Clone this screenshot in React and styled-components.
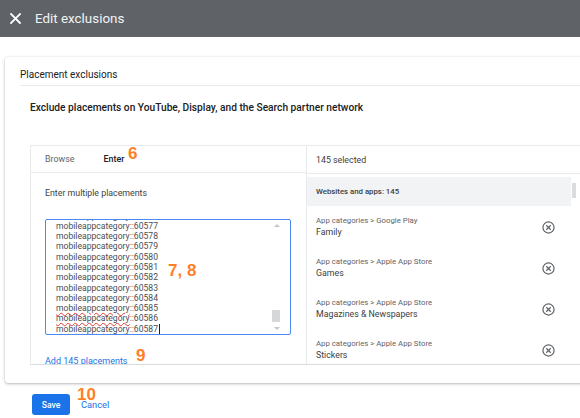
import React from "react";
import styled, { createGlobalStyle } from "styled-components";

const Global = createGlobalStyle`
  html, body { margin: 0; padding: 0; background: #fff; }
  body { width: 580px; height: 418px; overflow: hidden; font-family: Roboto, "Noto Sans", Arial, sans-serif; }
  * { box-sizing: border-box; }
`;

const Page = styled.div`
  position: relative;
  width: 580px;
  height: 418px;
  overflow: hidden;
`;

const Header = styled.header`
  height: 37px;
  background: #5f6368;
  display: flex;
  align-items: center;
  padding-left: 10px;
  gap: 14px;
  color: #fff;
`;

const Title = styled.h1`
  margin: 0;
  font-size: 13.4px;
  font-weight: 400;
  color: #f1f3f4;
`;

const Main = styled.main`
  padding: 20px 0 0 5px;
`;

const Card = styled.section`
  width: 620px;
  height: 326px;
  background: #fff;
  border-radius: 3px;
  box-shadow: 0 1px 3px rgba(60, 64, 67, 0.35), 0 0 1px rgba(60, 64, 67, 0.2);
  padding: 11px 0 0 15px;
  overflow: hidden;
`;

const CardTitle = styled.div`
  font-size: 10px;
  line-height: 13px;
  color: #202124;
  padding-bottom: 4px;
  border-bottom: 1px solid #e8eaed;
`;

const Description = styled.p`
  margin: 15px 0 0 10px;
  font-size: 10.2px;
  line-height: 13px;
  font-weight: 500;
  color: #202124;
`;

const Panel = styled.div`
  margin: 31px 0 0 10px;
  height: 220px;
  display: grid;
  grid-template-columns: 276px 1fr;
  border: 1px solid #e8eaed;
  border-bottom: 1px solid #dadce0;
  overflow: hidden;
`;

const LeftCol = styled.div`
  display: flex;
  flex-direction: column;
  border-right: 1px solid #e8eaed;
`;

const Tabs = styled.div`
  height: 27px;
  display: flex;
  align-items: center;
  gap: 29px;
  padding-left: 14px;
  border-bottom: 1px solid #e8eaed;
`;

const Tab = styled.span`
  font-size: 8.9px;
  color: ${(p) => (p.$active ? "#202124" : "#5f6368")};
  font-weight: ${(p) => (p.$active ? 500 : 400)};
`;

const LeftBody = styled.div`
  padding: 14px 15px 0 14px;
  display: flex;
  flex-direction: column;
`;

const Label = styled.div`
  font-size: 8.8px;
  color: #3c4043;
  line-height: 12px;
`;

const Field = styled.div`
  position: relative;
  margin-top: 20px;
  height: 116px;
  width: 246px;
  border: 1px solid #4a8af4;
  border-radius: 2px;
  overflow: hidden;
  padding-left: 10px;
`;

const Lines = styled.div`
  margin-top: -9.5px;
  font-size: 8.6px;
  line-height: 10.3px;
  color: #4a4d51;
`;

const Line = styled.div`
  white-space: nowrap;
  display: flex;
  align-items: center;
  height: 10.3px;
`;

const Word = styled.span`
  text-decoration: ${(p) => (p.$misspelled ? "underline wavy #e53935" : "none")};
  text-decoration-thickness: 1px;
  text-underline-offset: 0.5px;
`;

const Caret = styled.span`
  display: inline-block;
  width: 1px;
  height: 10px;
  background: #202124;
  margin-left: 1px;
`;

const ScrollUp = styled.span`
  position: absolute;
  right: 10px;
  top: 4px;
  width: 0;
  height: 0;
  border-left: 3px solid transparent;
  border-right: 3px solid transparent;
  border-bottom: 3px solid #c4c7c9;
`;

const ScrollDown = styled(ScrollUp)`
  top: auto;
  bottom: 4px;
  border-bottom: none;
  border-top: 3px solid #c4c7c9;
`;

const Thumb = styled.span`
  position: absolute;
  right: 10px;
  top: 90px;
  width: 8px;
  height: 12px;
  background: #d6d7d9;
`;

const AddLink = styled.a`
  margin-top: 21px;
  font-size: 9px;
  color: #1a73e8;
  text-decoration: none;
`;

const RightCol = styled.div`
  display: flex;
  flex-direction: column;
`;

const RightHead = styled.div`
  height: 28px;
  display: flex;
  align-items: center;
  padding-left: 9px;
  font-size: 8.8px;
  color: #3c4043;
  border-bottom: 1px solid #e8eaed;
`;

const GroupRow = styled.div`
  display: flex;
  align-items: stretch;
  margin-top: 3px;
  height: 29px;
`;

const Group = styled.div`
  width: 264px;
  background: #f1f3f4;
  display: flex;
  align-items: center;
  padding-left: 9px;
  font-size: 7.8px;
  font-weight: 500;
  color: #3c4043;
`;

const SideThumb = styled.div`
  width: 4px;
  margin: 6px 0 8px 1px;
  background: #dadce0;
`;

const Item = styled.div`
  height: 41px;
  width: 264px;
  display: flex;
  align-items: center;
  padding: 0 9px;
  justify-content: space-between;
`;

const ItemText = styled.div`
  display: flex;
  flex-direction: column;
`;

const Crumb = styled.span`
  font-size: 7.8px;
  line-height: 11px;
  color: #5f6368;
`;

const Name = styled.span`
  font-size: 8.8px;
  line-height: 12px;
  color: #3c4043;
`;

const RemoveBtn = styled.span`
  display: flex;
  margin-right: 7px;
  margin-top: 1px;
`;

const Footer = styled.footer`
  display: flex;
  align-items: center;
  gap: 11px;
  padding: 11px 0 0 27px;
`;

const SaveButton = styled.button`
  width: 38px;
  height: 21px;
  border: none;
  border-radius: 3px;
  background: #1a73e8;
  color: #fff;
  font-family: inherit;
  font-size: 8.6px;
  font-weight: 500;
  padding: 0;
`;

const CancelButton = styled.button`
  border: none;
  background: none;
  padding: 0;
  font-family: inherit;
  font-size: 9.3px;
  color: #1a73e8;
`;

const Note = styled.span`
  position: absolute;
  left: ${(p) => p.$x}px;
  top: ${(p) => p.$y}px;
  font-family: "Liberation Sans", Arial, sans-serif;
  font-weight: 700;
  font-size: 17px;
  line-height: 17px;
  color: #ff7f27;
`;

const CloseIcon = () => (
  <svg width="11" height="11" viewBox="0 0 11 11">
    <path d="M1 1L10 10M10 1L1 10" stroke="#fff" strokeWidth="1.8" strokeLinecap="square" />
  </svg>
);

const RemoveIcon = () => (
  <svg width="13" height="13" viewBox="0 0 14 14">
    <circle cx="7" cy="7" r="6" fill="none" stroke="#5f6368" strokeWidth="1.3" />
    <path d="M4.6 4.6L9.4 9.4M9.4 4.6L4.6 9.4" stroke="#5f6368" strokeWidth="1.3" />
  </svg>
);

const codes = [];
for (let n = 60576; n <= 60587; n++) codes.push(n);

const items = [
  ["App categories > Google Play", "Family"],
  ["App categories > Apple App Store", "Games"],
  ["App categories > Apple App Store", "Magazines & Newspapers"],
  ["App categories > Apple App Store", "Stickers"],
];

export default function App() {
  return (
    <Page>
      <Global />
      <Header>
        <CloseIcon />
        <Title>Edit exclusions</Title>
      </Header>
      <Main>
        <Card>
          <CardTitle>Placement exclusions</CardTitle>
          <Description>Exclude placements on YouTube, Display, and the Search partner network</Description>
          <Panel>
            <LeftCol>
              <Tabs>
                <Tab>Browse</Tab>
                <Tab $active>Enter</Tab>
              </Tabs>
              <LeftBody>
                <Label>Enter multiple placements</Label>
                <Field>
                  <Lines>
                    {codes.map((n) => (
                      <Line key={n}>
                        <Word $misspelled={n >= 60585}>mobileappcategory</Word>::{n}
                        {n === 60587 && <Caret />}
                      </Line>
                    ))}
                  </Lines>
                  <ScrollUp />
                  <Thumb />
                  <ScrollDown />
                </Field>
                <AddLink href="#">Add 145 placements</AddLink>
              </LeftBody>
            </LeftCol>
            <RightCol>
              <RightHead>145 selected</RightHead>
              <GroupRow>
                <Group>Websites and apps: 145</Group>
                <SideThumb />
              </GroupRow>
              {items.map(([c, n]) => (
                <Item key={n}>
                  <ItemText>
                    <Crumb>{c}</Crumb>
                    <Name>{n}</Name>
                  </ItemText>
                  <RemoveBtn>
                    <RemoveIcon />
                  </RemoveBtn>
                </Item>
              ))}
            </RightCol>
          </Panel>
        </Card>
        <Footer>
          <SaveButton>Save</SaveButton>
          <CancelButton>Cancel</CancelButton>
        </Footer>
      </Main>
      <Note $x={128} $y={145}>6</Note>
      <Note $x={168} $y={262}>7, 8</Note>
      <Note $x={136} $y={347}>9</Note>
      <Note $x={77} $y={386}>10</Note>
    </Page>
  );
}
